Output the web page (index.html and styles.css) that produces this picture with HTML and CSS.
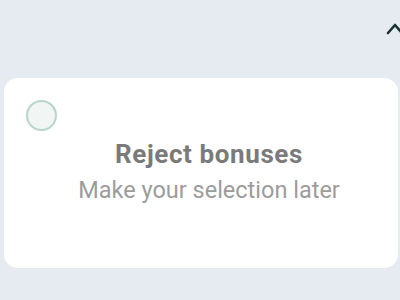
FILE: index.html
```html
<!DOCTYPE html>
<html>
<head>
<meta charset="utf-8">
<link rel="stylesheet" href="styles.css">
</head>
<body>
<div class="page">
  <div class="header">
    <svg class="chevron" width="20" height="14" viewBox="0 0 20 14">
      <polyline points="2,12 9,4 16,12" fill="none" stroke="#1a342f" stroke-width="2.6" stroke-linecap="round" stroke-linejoin="round"/>
    </svg>
  </div>
  <div class="card">
    <div class="radio"></div>
    <div class="texts">
      <div class="title">Reject bonuses</div>
      <div class="sub">Make your selection later</div>
    </div>
  </div>
</div>
</body>
</html>
```
FILE: styles.css
```css
html, body {
  margin: 0;
  padding: 0;
}
body {
  background: #e5ebf1;
  width: 400px;
  height: 300px;
  overflow: hidden;
  font-family: Roboto, "Liberation Sans", sans-serif;
}
.page {
  padding: 0 0 0 4px;
}
.header {
  height: 78px;
  display: flex;
  justify-content: flex-end;
  align-items: flex-start;
}
.chevron {
  margin-top: 21px;
  margin-right: -6px;
}
.card {
  background: #ffffff;
  width: 394px;
  height: 190px;
  border-radius: 14px;
  box-sizing: border-box;
  padding: 22px 0 0 22px;
  position: relative;
}
.radio {
  width: 31px;
  height: 31px;
  box-sizing: border-box;
  border: 2px solid #b8d5cb;
  border-radius: 50%;
  background: #f1f6f5;
}
.texts {
  display: flex;
  flex-direction: column;
  align-items: center;
  margin-left: -6px;
  margin-top: 8px;
}
.title {
  font-size: 26px;
  font-weight: 700;
  color: #7a7a7a;
  line-height: 30px;
  letter-spacing: 0.6px;
}
.sub {
  font-size: 23.5px;
  color: #9c9c9c;
  line-height: 28px;
  margin-top: 7px;
}
```
